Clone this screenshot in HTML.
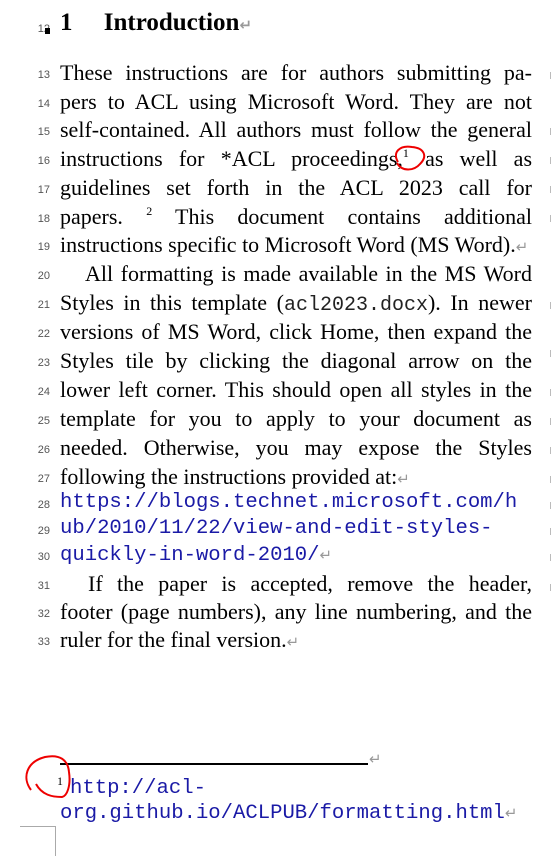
<!DOCTYPE html>
<html><head><meta charset="utf-8">
<style>
html,body{margin:0;padding:0;background:#fff;width:554px;height:856px;overflow:hidden;position:relative}
.l{position:absolute;left:60px;height:28px;line-height:28px;font-family:"Liberation Serif",serif;font-size:22px;color:#000;white-space:nowrap}
.l span.t{display:inline-block;transform-origin:0 50%}
.n{position:absolute;left:30px;width:20px;text-align:right;font-family:"Liberation Sans",sans-serif;font-size:11px;color:#555;line-height:14px}
.m{font-family:"Liberation Mono",monospace;font-size:20px;color:#222}
.u{font-family:"Liberation Mono",monospace;font-size:20.6px;color:#1a1aa6}
.r{color:#999;font-family:"DejaVu Sans",sans-serif;font-size:15px}
.rm{position:absolute;left:550px;width:3px;height:7px;border-left:1px solid #bbb}
sup{font-size:12px;vertical-align:0;position:relative;top:-9px}
</style></head><body>
<div class="n" style="top:22px">12</div>
<div style="position:absolute;left:45px;top:28px;width:5px;height:6px;background:#000"></div>
<div class="l" style="top:9px;font-weight:bold;font-size:25px">1&nbsp;&nbsp;&nbsp;&nbsp;&nbsp;Introduction<span class="r">↵</span></div>

<div class="n" style="top:68px">13</div><div class="l" style="top:59px"><span class="t j" data-w="472">These instructions are for authors submitting pa-</span></div>
<div class="n" style="top:97px">14</div><div class="l" style="top:88px"><span class="t j" data-w="472">pers to ACL using Microsoft Word. They are not</span></div>
<div class="n" style="top:125px">15</div><div class="l" style="top:116px"><span class="t j" data-w="472">self-contained. All authors must follow the general</span></div>
<div class="n" style="top:154px">16</div><div class="l" style="top:145px"><span class="t j" data-w="472">instructions for *ACL proceedings,<sup>1</sup> as well as</span></div>
<div class="n" style="top:183px">17</div><div class="l" style="top:174px"><span class="t j" data-w="472">guidelines set forth in the ACL 2023 call for</span></div>
<div class="n" style="top:212px">18</div><div class="l" style="top:203px"><span class="t j" data-w="472">papers. <sup>2</sup> This document contains additional</span></div>
<div class="n" style="top:240px">19</div><div class="l" style="top:231px"><span class="t">instructions specific to Microsoft Word (MS Word).</span><span class="r">↵</span></div>
<div class="n" style="top:269px">20</div><div class="l" style="top:260px;left:85px"><span class="t j" data-w="447">All formatting is made available in the MS Word</span></div>
<div class="n" style="top:298px">21</div><div class="l" style="top:289px"><span class="t j" data-w="472">Styles in this template (<span class="m">acl2023.docx</span>). In newer</span></div>
<div class="n" style="top:327px">22</div><div class="l" style="top:318px"><span class="t j" data-w="472">versions of MS Word, click Home, then expand the</span></div>
<div class="n" style="top:356px">23</div><div class="l" style="top:347px"><span class="t j" data-w="472">Styles tile by clicking the diagonal arrow on the</span></div>
<div class="n" style="top:385px">24</div><div class="l" style="top:376px"><span class="t j" data-w="472">lower left corner. This should open all styles in the</span></div>
<div class="n" style="top:414px">25</div><div class="l" style="top:405px"><span class="t j" data-w="472">template for you to apply to your document as</span></div>
<div class="n" style="top:443px">26</div><div class="l" style="top:434px"><span class="t j" data-w="472">needed. Otherwise, you may expose the Styles</span></div>
<div class="n" style="top:472px">27</div><div class="l" style="top:463px"><span class="t">following the instructions provided at:</span><span class="r">↵</span></div>
<div class="n" style="top:498px">28</div><div class="l u" style="top:489px">https://blogs.technet.microsoft.com/h</div>
<div class="n" style="top:524px">29</div><div class="l u" style="top:515px">ub/2010/11/22/view-and-edit-styles-</div>
<div class="n" style="top:550px">30</div><div class="l u" style="top:541px">quickly-in-word-2010/<span class="r">↵</span></div>
<div class="n" style="top:579px">31</div><div class="l" style="top:570px;left:88px"><span class="t j" data-w="444">If the paper is accepted, remove the header,</span></div>
<div class="n" style="top:607px">32</div><div class="l" style="top:598px"><span class="t j" data-w="472">footer (page numbers), any line numbering, and the</span></div>
<div class="n" style="top:635px">33</div><div class="l" style="top:626px"><span class="t">ruler for the final version.</span><span class="r">↵</span></div>

<div class="rm" style="top:72px"></div><div class="rm" style="top:128px"></div><div class="rm" style="top:157px"></div><div class="rm" style="top:186px"></div><div class="rm" style="top:215px"></div>
<div class="rm" style="top:302px"></div><div class="rm" style="top:350px"></div><div class="rm" style="top:389px"></div><div class="rm" style="top:418px"></div><div class="rm" style="top:447px"></div><div class="rm" style="top:476px"></div><div class="rm" style="top:502px"></div><div class="rm" style="top:528px"></div><div class="rm" style="top:554px"></div><div class="rm" style="top:584px"></div>

<div style="position:absolute;left:60px;top:763px;width:308px;height:2px;background:#000"></div>
<div class="r" style="position:absolute;left:369px;top:750px">↵</div>
<div style="position:absolute;left:57px;top:774px;font-family:'Liberation Serif',serif;font-size:12px">1</div>
<div class="l u" style="top:775px;left:70px">http://acl-</div>
<div class="l u" style="top:799px">org.github.io/ACLPUB/formatting.html<span class="r">↵</span></div>
<div style="position:absolute;left:20px;top:826px;width:35px;height:30px;border-top:1px solid #aaa;border-right:1px solid #aaa"></div>

<svg style="position:absolute;left:0;top:0" width="554" height="856">
<path d="M398 162 C392 152 400 145 412 147 C424 148 428 156 420 164 C414 171 402 172 397 163" fill="none" stroke="#e00" stroke-width="2"/>
<path d="M31 790 C22 778 26 762 45 757 C60 754 68 760 69 772 C71 786 67 796 62 797 C52 797 42 795 36 784" fill="none" stroke="#e00" stroke-width="2"/>
</svg>
<script>
document.querySelectorAll('.j').forEach(function(s){
  var target=+s.dataset.w; var w=s.getBoundingClientRect().width;
  if(w>target){s.style.transform='scaleX('+(target/w)+')';s.style.marginRight=(target-w)+'px';}
  else {
    var sp=(s.textContent.match(/ /g)||[]).length;
    if(sp&&target-w<120) s.style.wordSpacing=((target-w)/sp)+'px';
  }
});
</script>
</body></html>
